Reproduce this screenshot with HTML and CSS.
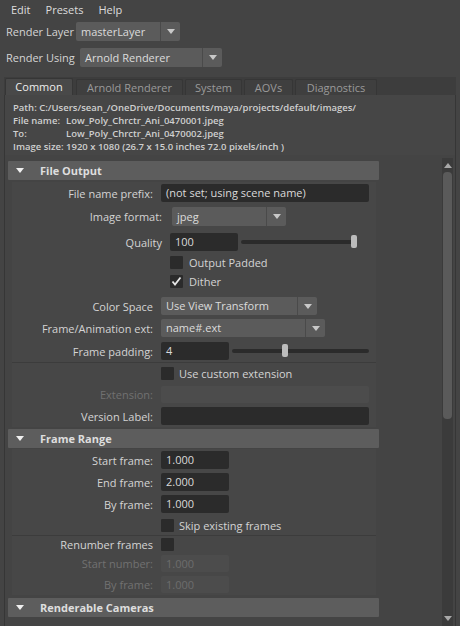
FILE: index.html
```html
<!DOCTYPE html>
<html lang="en">
<head>
    <meta charset="UTF-8">
    <title>Render Settings</title>
    <link rel="stylesheet" href="styles.css">
</head>
<body>

<div class="menubar">
    <span>Edit</span>
    <span>Presets</span>
    <span>Help</span>
</div>

<div class="top-row layer-row">
    <span class="top-label layer-label">Render Layer</span>
    <div class="dropdown dd-layer"><span class="dd-text">masterLayer</span><span class="dd-arrow"><i class="tri-down"></i></span></div>
</div>
<div class="top-row using-row">
    <span class="top-label using-label">Render Using</span>
    <div class="dropdown dd-using"><span class="dd-text">Arnold Renderer</span><span class="dd-arrow"><i class="tri-down"></i></span></div>
</div>

<div class="tabbar">
    <div class="tab active tab-common">Common</div>
    <div class="tab tab-arnold">Arnold Renderer</div>
    <div class="tab tab-system">System</div>
    <div class="tab tab-aovs">AOVs</div>
    <div class="tab tab-diag">Diagnostics</div>
</div>

<div class="panel">
    <div class="info">
        <div>Path: C:/Users/sean_/OneDrive/Documents/maya/projects/default/images/</div>
        <div><span class="info-key">File name:</span>Low_Poly_Chrctr_Ani_0470001.jpeg</div>
        <div><span class="info-key">To:</span>Low_Poly_Chrctr_Ani_0470002.jpeg</div>
        <div>Image size: 1920 x 1080 (26.7 x 15.0 inches 72.0 pixels/inch )</div>
    </div>

    <div class="scroll">
        <div class="sections">

            <div class="section-head"><i class="tri-down head-tri"></i>File Output</div>
            <div class="section-body">
                <div class="row mt2"><span class="lbl">File name prefix:</span><div class="field long">(not set; using scene name)</div></div>
                <div class="row mt1"><span class="lbl wide">Image format:</span><div class="dropdown dd-format"><span class="dd-text">jpeg</span><span class="dd-arrow"><i class="tri-down"></i></span></div></div>
                <div class="row mt4"><span class="lbl wide">Quality</span><div class="field short">100</div>
                    <div class="slider quality-slider"><span class="track"></span><span class="handle" style="left: 98%"></span></div>
                </div>
                <div class="row check"><span class="lbl wide"></span><span class="box"></span><span class="check-text">Output Padded</span></div>
                <div class="row check"><span class="lbl wide"></span><span class="box"><svg width="13" height="13" viewBox="0 0 13 13"><polyline points="2.5,6.5 5,9.5 10.5,2.5" fill="none" stroke="#e6e6e6" stroke-width="1.8"/></svg></span><span class="check-text">Dither</span></div>
                <div class="row mt4"><span class="lbl">Color Space</span><div class="dropdown dd-color"><span class="dd-text">Use View Transform</span><span class="dd-arrow"><i class="tri-down"></i></span></div></div>
                <div class="row"><span class="lbl">Frame/Animation ext:</span><div class="dropdown dd-ext"><span class="dd-text">name#.ext</span><span class="dd-arrow"><i class="tri-down"></i></span></div></div>
                <div class="row mt1"><span class="lbl">Frame padding:</span><div class="field short">4</div>
                    <div class="slider padding-slider"><span class="track"></span><span class="handle" style="left: 39%"></span></div>
                </div>
                <div class="separator"></div>
                <div class="row check mt1"><span class="lbl"></span><span class="box"></span><span class="check-text">Use custom extension</span></div>
                <div class="row"><span class="lbl disabled">Extension:</span><div class="field long off"></div></div>
                <div class="row"><span class="lbl">Version Label:</span><div class="field long"></div></div>
            </div>

            <div class="section-head mt2"><i class="tri-down head-tri"></i>Frame Range</div>
            <div class="section-body">
                <div class="row mt1"><span class="lbl">Start frame:</span><div class="field short">1.000</div></div>
                <div class="row"><span class="lbl">End frame:</span><div class="field short">2.000</div></div>
                <div class="row"><span class="lbl">By frame:</span><div class="field short">1.000</div></div>
                <div class="row check mt1"><span class="lbl"></span><span class="box"></span><span class="check-text">Skip existing frames</span></div>
                <div class="separator"></div>
                <div class="row check tight"><span class="lbl">Renumber frames</span><span class="box"></span></div>
                <div class="row short-row"><span class="lbl disabled">Start number:</span><div class="field short off">1.000</div></div>
                <div class="row"><span class="lbl disabled">By frame:</span><div class="field short off">1.000</div></div>
            </div>

            <div class="section-head mt3"><i class="tri-down head-tri"></i>Renderable Cameras</div>
        </div>

        <div class="scrollbar">
            <i class="tri-up"></i>
            <div class="thumb"></div>
            <div class="rest"></div>
            <i class="tri-down bar-down"></i>
        </div>
    </div>
</div>

</body>
</html>
```

FILE: styles.css
```css
body {
    margin: 0;
    width: 460px;
    height: 626px;
    overflow: hidden;
    background: #444444;
    font-family: "Open Sans", "Noto Sans", sans-serif;
    font-size: 11px;
    color: #d4d4d4;
}

/* menu + top rows */
.menubar {
    display: flex;
    gap: 15px;
    height: 18px;
    align-items: center;
    padding-left: 11px;
    color: #dddddd;
}

.top-row {
    display: flex;
    align-items: center;
    padding-left: 6px;
    height: 19px;
}

.layer-row {
    margin-top: 4px;
}

.using-row {
    margin-top: 7px;
}

.layer-label {
    width: 70px;
}

.using-label {
    width: 74px;
}

.dropdown {
    display: flex;
    height: 19px;
    background: #5b5b5b;
    border-radius: 2px;
    color: #dcdcdc;
    overflow: hidden;
}

.dd-text {
    flex: 1;
    line-height: 19px;
    padding-left: 5px;
    white-space: nowrap;
}

.dd-arrow {
    width: 19px;
    border-left: 1px solid #4a4a4a;
    display: flex;
    align-items: center;
    justify-content: center;
}

.tri-down {
    display: block;
    width: 0;
    height: 0;
    border-left: 4px solid transparent;
    border-right: 4px solid transparent;
    border-top: 5px solid #c8c8c8;
}

.tri-up {
    display: block;
    width: 0;
    height: 0;
    border-left: 4px solid transparent;
    border-right: 4px solid transparent;
    border-bottom: 5px solid #a8a8a8;
}

.dd-layer {
    width: 104px;
}

.dd-using {
    width: 142px;
}

/* tabs */
.tabbar {
    display: flex;
    align-items: flex-end;
    gap: 2px;
    margin: 10px 4px 0 4px;
    height: 18px;
    padding-left: 1px;
    background: #3d3d3d;
}

.tab {
    height: 16px;
    line-height: 16px;
    text-align: center;
    background: #3f3f3f;
    border: 1px solid #363636;
    border-bottom: none;
    border-radius: 2px 2px 0 0;
    color: #9a9a9a;
    box-sizing: border-box;
    white-space: nowrap;
}

.tab.active {
    height: 17px;
    background: #494949;
    color: #eeeeee;
    margin-right: 1px;
}

.tab-common { width: 68px; }
.tab-arnold { width: 107px; }
.tab-system { width: 57px; }
.tab-aovs { width: 49px; }
.tab-diag { width: 82px; }

/* panel */
.panel {
    margin: 0 4px;
    background: #464646;
    border-left: 1px solid #363636;
    border-right: 1px solid #363636;
}

.info {
    padding: 6px 0 0 8px;
    height: 54px;
    box-sizing: border-box;
    height: 60px;
    font-size: 9.5px;
    font-weight: 600;
    line-height: 13px;
    color: #cfcfcf;
    white-space: nowrap;
}

.info-key {
    display: inline-block;
    width: 53px;
}

.scroll {
    display: flex;
    height: 471px;
    padding-top: 6px;
    box-sizing: border-box;
    background: #444444;
}

.sections {
    width: 371px;
    margin-left: 3px;
}

.section-head {
    display: flex;
    align-items: center;
    height: 19px;
    background: #5d5d5d;
    border-radius: 1px;
    font-weight: bold;
    color: #dedede;
}

.head-tri {
    margin: 0 16px 0 8px;
    border-left-width: 4.5px;
    border-right-width: 4.5px;
    border-top-color: #f0f0f0;
}

.section-body {
    margin: 0 3px 0 4px;
    background: #474747;
}

.row {
    display: flex;
    align-items: center;
    height: 22px;
}

.row.check {
    height: 19px;
}

.row.check.tight {
    height: 17px;
}

.row.short-row {
    height: 20px;
}

.mt1 { margin-top: 1px; }
.mt2 { margin-top: 2px; }
.mt3 { margin-top: 3px; }
.mt4 { margin-top: 4px; }

.lbl {
    width: 141px;
    margin-right: 8px;
    text-align: right;
    white-space: nowrap;
    color: #d4d4d4;
}

.lbl.wide {
    width: 150px;
}

.lbl.disabled {
    color: #717171;
}

.field {
    height: 18px;
    line-height: 18px;
    padding: 0 5px;
    box-sizing: border-box;
    background: #2b2b2b;
    border-radius: 2px;
    color: #dadada;
}

.field.long {
    width: 208px;
}

.field.short {
    width: 68px;
}

.field.off {
    background: #4c4c4c;
    color: #6c6c6c;
    height: 17px;
    line-height: 17px;
}

.dd-format {
    width: 114px;
    margin-left: 2px;
}

.dd-color {
    width: 156px;
    height: 18px;
}

.dd-ext {
    width: 164px;
    height: 18px;
}

.dd-color .dd-text, .dd-ext .dd-text {
    line-height: 18px;
}

.slider {
    position: relative;
    height: 14px;
    margin-left: 3px;
    display: flex;
    align-items: center;
}

.quality-slider {
    width: 115px;
}

.padding-slider {
    width: 137px;
}

.track {
    width: 100%;
    height: 4px;
    background: #2b2b2b;
    border-radius: 2px;
}

.handle {
    position: absolute;
    top: 0;
    width: 6px;
    height: 13px;
    margin-left: -3px;
    background: #bcbcbc;
    border-radius: 2px;
}

.box {
    width: 13px;
    height: 13px;
    background: #2b2b2b;
    border-radius: 1px;
}

.box svg {
    display: block;
}

.check-text {
    margin-left: 5px;
}

.row .lbl.wide + .box + .check-text {
    margin-left: 6px;
}

.separator {
    height: 1px;
    background: #3c3c3c;
}

/* scrollbar */
.scrollbar {
    margin: -3px 2px 0 auto;
    width: 11px;
    height: 468px;
    background: #3b3b3b;
    display: flex;
    flex-direction: column;
    align-items: center;
}

.scrollbar .tri-up {
    margin-top: 5px;
}

.thumb {
    margin-top: 4px;
    width: 9px;
    height: 247px;
    background: #5a5a5a;
    border-radius: 4px;
}

.rest {
    flex: 1;
}

.bar-down {
    margin-bottom: 5px;
    border-top-color: #a8a8a8;
}
```
